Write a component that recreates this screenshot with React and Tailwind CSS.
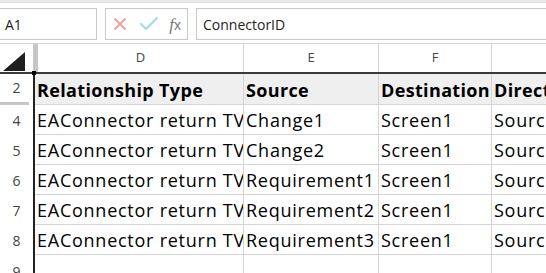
import React from "react";

const rows = [
  { n: "4", d: "EAConnector return TV", e: "Change1", f: "Screen1", g: "Source -> Destination" },
  { n: "5", d: "EAConnector return TV", e: "Change2", f: "Screen1", g: "Source -> Destination" },
  { n: "6", d: "EAConnector return TV", e: "Requirement1", f: "Screen1", g: "Source -> Destination" },
  { n: "7", d: "EAConnector return TV", e: "Requirement2", f: "Screen1", g: "Source -> Destination" },
  { n: "8", d: "EAConnector return TV", e: "Requirement3", f: "Screen1", g: "Source -> Destination" },
];

function Cell({ children, w, bold, last }) {
  return (
    <div
      className={`h-full overflow-hidden whitespace-nowrap pl-[2px] flex items-end pb-[5px] text-[18px] leading-none text-black border-[#d4d4d4] ${last ? "flex-1 min-w-0" : "border-r shrink-0"} ${w || ""} ${bold ? "font-bold" : ""}`}
      style={{ fontFamily: "'Open Sans', 'Liberation Sans', sans-serif", letterSpacing: bold ? "0.35px" : "0.75px" }}
    >
      <span className="block">{children}</span>
    </div>
  );
}

export default function App() {
  return (
    <div className="w-[546px] h-[273px] overflow-hidden bg-white relative" style={{ fontFamily: "'Segoe UI', 'Open Sans', sans-serif" }}>
      {/* top strip */}
      <div className="h-[3px] bg-[#e9e9e9] border-b border-[#dcdcdc]" />
      {/* formula bar */}
      <div className="h-[41px] flex items-start pt-[5px] border-b border-[#d6d6d6] bg-white">
        <div className="w-[97px] shrink-0 h-[32px] border border-l-0 border-[#c8c8c8] flex items-center pl-[5px] text-[14px] text-[#222]">A1</div>
        <div className="w-[8px] shrink-0" />
        <div className="w-[83px] shrink-0 h-[32px] border border-[#c8c8c8] flex items-center justify-between px-[6px]">
          <svg width="16" height="16" viewBox="0 0 16 16">
            <path d="M3 3 L13 13 M13 3 L3 13" stroke="#f4a3a3" strokeWidth="2" strokeLinecap="round" />
          </svg>
          <svg width="20" height="16" viewBox="0 0 20 16">
            <path d="M2 8 L7 13 L18 2" stroke="#a9dbe9" strokeWidth="2.2" fill="none" strokeLinecap="round" strokeLinejoin="round" />
          </svg>
          <span className="text-[17px] italic text-[#777] leading-none" style={{ fontFamily: "'Liberation Serif', serif" }}>f<span className="not-italic" style={{ fontFamily: "'Liberation Sans', sans-serif", fontSize: "14px" }}>x</span></span>
        </div>
        <div className="w-[8px] shrink-0" />
        <div className="flex-1 h-[32px] border border-r-0 border-[#c8c8c8] flex items-center pl-[6px] text-[14px] text-[#222]">ConnectorID</div>
      </div>
      {/* column header */}
      <div className="h-[30px] flex border-b-2 border-[#3a3a3a] text-[13px] text-[#444]">
        <div className="w-[33px] shrink-0 h-full relative">
          <svg className="absolute left-[3px] top-[8px]" width="23" height="19" viewBox="0 0 23 19">
            <polygon points="22,0 22,19 0,19" fill="#1f1f1f" />
          </svg>
        </div>
        <div className="w-[5px] shrink-0 h-full bg-[#c6c6c6]" />
        <div className="w-[206px] shrink-0 h-full border-r border-[#d4d4d4] flex items-center justify-center">D</div>
        <div className="w-[135px] shrink-0 h-full border-r border-[#d4d4d4] flex items-center justify-center">E</div>
        <div className="w-[113px] shrink-0 h-full border-r border-[#d4d4d4] flex items-center justify-center">F</div>
        <div className="flex-1 h-full" />
      </div>
      {/* rows */}
      <div className="flex">
        <div className="w-[33px] shrink-0 flex flex-col text-[14px] text-[#444]">
          <div className="h-[31px] relative flex items-center justify-center pb-[4px]">
            2
            <div className="absolute left-0 right-[4px] bottom-0 h-[3px] bg-[#c6c6c6]" />
          </div>
          {rows.map((r) => (
            <div key={r.n} className="h-[30px] flex items-center justify-center">{r.n}</div>
          ))}
          <div className="h-[30px] flex items-start pt-[6px] justify-center">9</div>
        </div>
        <div className="flex-1 min-w-0 flex flex-col border-l-2 border-[#222] relative">
          <div className="absolute -left-[3px] -top-[3px] w-[4px] h-[4px] bg-black" />
          <div className="h-[31px] flex bg-[#efefef] border-b border-[#d4d4d4]">
            <Cell w="w-[209px]" bold>Relationship Type</Cell>
            <Cell w="w-[135px]" bold>Source</Cell>
            <Cell w="w-[113px]" bold>Destination</Cell>
            <Cell last bold>Direction</Cell>
          </div>
          {rows.map((r) => (
            <div key={r.n} className="h-[30px] flex border-b border-[#d4d4d4]">
              <Cell w="w-[209px]">{r.d}</Cell>
              <Cell w="w-[135px]">{r.e}</Cell>
              <Cell w="w-[113px]">{r.f}</Cell>
              <Cell last>{r.g}</Cell>
            </div>
          ))}
          <div className="h-[30px] flex">
            <Cell w="w-[209px]"> </Cell>
            <Cell w="w-[135px]"> </Cell>
            <Cell w="w-[113px]"> </Cell>
            <Cell last> </Cell>
          </div>
        </div>
      </div>
    </div>
  );
}
